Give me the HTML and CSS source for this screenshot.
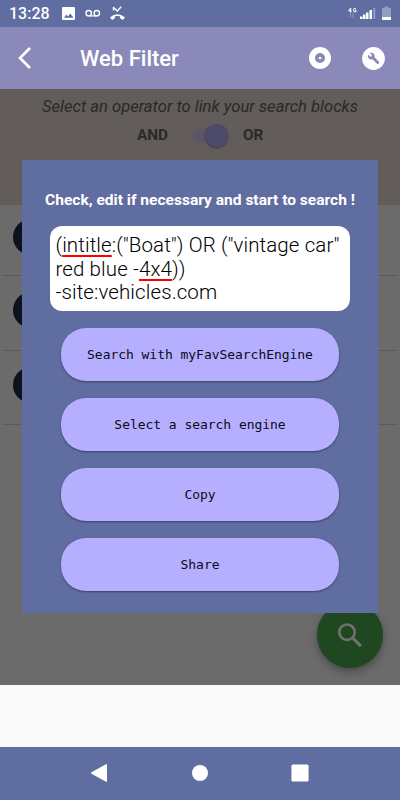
FILE: index.html
```html
<!DOCTYPE html>
<html lang="en">
<head>
  <meta charset="UTF-8" />
  <meta name="viewport" content="width=device-width, initial-scale=1.0"/>
  <title>Web Filter</title>
  <link rel="stylesheet" href="styles.css">
</head>
<body>
  <div class="screen">
    <div class="status-bar">
      <span class="clock">13:28</span>
      <svg class="status-left" width="64" height="16" viewBox="0 0 64 16">
        <path fill="#fff" fill-rule="evenodd" d="M1.300 1h10.400q1.300 0 1.300 1.300v10.400q0 1.300-1.300 1.300H1.300Q0 14 0 12.700V2.300Q0 1 1.300 1zM2 11.700h9.500L8.300 7.400l-2.400 3.100-1.600-2z"/>
        <g fill="none" stroke="#fff" stroke-width="1.400">
          <circle cx="26.700" cy="7.200" r="2.700"/>
          <circle cx="34.800" cy="7.200" r="2.700"/>
          <path d="M26.700 9.900h8.100M51.500 1v3.500M51.300 1.200l4 3.800 3.900-4.200"/>
        </g>
        <path fill="#fff" d="M48 11.500q7.300-6.400 15 0l-2.200 2.500q-1.400-1.300-2.700-1.700v-2q-2.600-.8-5.200 0v2q-1.300.4-2.700 1.700z"/>
      </svg>
      <svg class="status-right" width="44" height="15" viewBox="0 0 44 15">
        <path fill="none" stroke="#fff" stroke-width="1" d="M2.700 6.500V2L.600 5h3M8 2.800q-2.500-1.400-2.500 1.200t2.500 1.800V4.200H6.800"/>
        <path fill="none" stroke="#8f9ac0" d="M2.500 7v4M5 7v5"/>
        <path fill="#fff" d="M12 10.500h2.500V13H12zM15 8.500h2.500V13H15zM18 6.500h2.500V13H18zM21.500 4H24v9h-2.500z"/>
        <path fill="#929dc4" d="M25.300 2h2v11h-2zM34 2h2.500V.500h4V2H43v9h-9z"/>
        <path fill="#fff" d="M34 11h9v3h-9z"/>
      </svg>
    </div>

    <div class="app-bar">
      <svg class="back" width="16" height="24" viewBox="0 0 16 24">
        <path fill="none" stroke="#fff" stroke-width="2.700" d="M13 2L3 12l10 10"/>
      </svg>
      <div class="title">Web Filter</div>
      <svg class="disc" width="22" height="22" viewBox="0 0 22 22">
        <circle cx="11" cy="11" r="11" fill="#fff"/>
        <circle cx="11" cy="11" r="5" fill="#8a89ba"/>
        <circle cx="11" cy="11" r="1.300" fill="#fff"/>
      </svg>
      <svg width="23" height="23" viewBox="0 0 23 23">
        <circle cx="11.500" cy="11.500" r="11.400" fill="#fff"/>
        <path fill="#8a89ba" transform="translate(5.400 5.200) scale(.52)" d="M22.700 19l-9.100-9.100c.9-2.300.4-5-1.500-6.900-2-2-5-2.400-7.400-1.300L9 6 6 9 1.600 4.700C.4 7.100.9 10.100 2.900 12.100c1.900 1.900 4.600 2.400 6.900 1.500l9.100 9.100c.4.4 1 .4 1.400 0l2.300-2.300c.5-.4.5-1.100.1-1.400z"/>
      </svg>
    </div>

    <div class="page">
      <div class="operator">
        <div class="hint">Select an operator to link your search blocks</div>
        <div class="choice">
          <span>AND</span>
          <span class="switch"><span class="thumb"></span></span>
          <span>OR</span>
        </div>
      </div>
      <div class="blocks">
        <div class="block"><span class="bullet"></span></div>
        <div class="block"><span class="bullet"></span></div>
        <div class="block"><span class="bullet"></span></div>
      </div>
      <div class="fab">
        <svg width="24" height="25" viewBox="0 0 24 25">
          <circle cx="9" cy="9.200" r="7.700" fill="none" stroke="#6f706f" stroke-width="2.600"/>
          <path fill="none" stroke="#6f706f" stroke-width="3.200" d="M14.800 15.200l8 8"/>
        </svg>
      </div>

      <div class="dialog">
        <div class="dialog-title">Check, edit if necessary and start to search !</div>
        <div class="query">(<span class="typo">intitle</span>:("Boat") OR ("vintage car"<br>red blue -<span class="typo">4x4</span>))<br>-site:vehicles.com</div>
        <button>Search with myFavSearchEngine</button>
        <button>Select a search engine</button>
        <button>Copy</button>
        <button>Share</button>
      </div>
    </div>

    <div class="bottom"></div>

    <div class="nav-bar">
      <svg width="18" height="20" viewBox="0 0 18 20">
        <path fill="#fff" d="M15 1.200q1-.5 1 .6v16.400q0 1.100-1 .6L.500 10.700q-1-.7 0-1.400z"/>
      </svg>
      <svg width="18" height="18" viewBox="0 0 18 18">
        <circle cx="9" cy="9" r="8" fill="#fff"/>
      </svg>
      <svg width="18" height="18" viewBox="0 0 18 18">
        <rect x=".4" y=".4" width="17.200" height="17.200" rx="1.500" fill="#fff"/>
      </svg>
    </div>
  </div>
</body>
</html>
```
FILE: styles.css
```css
body {
  margin: 0;
  font-family: Roboto, sans-serif;
}
.screen {
  display: flex;
  flex-direction: column;
  width: 400px;
  height: 800px;
  overflow: hidden;
}
.status-bar {
  display: flex;
  align-items: center;
  height: 27px;
  box-sizing: border-box;
  padding: 0 8px 0 9px;
  background-color: #5f6da0;
  color: #fff;
}
.clock {
  width: 53px;
  font-size: 16px;
  font-weight: 500;
  line-height: 27px;
}
.status-right {
  margin-left: auto;
}
.app-bar {
  display: flex;
  align-items: center;
  height: 62px;
  box-sizing: border-box;
  padding: 0 15px 0 17px;
  background-color: #8a89ba;
  color: #fff;
}
.title {
  flex: 1;
  margin-left: 47px;
  padding-top: 1px;
  font-size: 22px;
  font-weight: 500;
}
.disc {
  margin-right: 31px;
}
.page {
  position: relative;
  height: 596px;
  overflow: hidden;
  background-color: #6b6b6b;
}
.operator {
  height: 116px;
  background-color: #625c5b;
  color: #2a2929;
}
.hint {
  padding-top: 7px;
  font-size: 16.6px;
  font-style: italic;
  line-height: 22px;
  text-align: center;
  white-space: nowrap;
}
.choice {
  display: flex;
  align-items: center;
  height: 34px;
  padding-left: 137px;
  font-size: 15.3px;
  font-weight: bold;
}
.switch {
  display: flex;
  justify-content: flex-end;
  align-items: center;
  width: 36px;
  height: 15px;
  margin: 0 15px 0 24px;
  border-radius: 8px;
  background-color: #5d5765;
}
.thumb {
  width: 23px;
  height: 23px;
  border-radius: 50%;
  background-color: #4e4a6e;
  box-shadow: 0 1px 2px rgba(0, 0, 0, 0.4);
}
.blocks {
  padding: 0 3px;
}
.block {
  display: flex;
  align-items: center;
  height: 74px;
  box-sizing: border-box;
  padding: 0 0 6px 10px;
  border-bottom: 1px solid #5a5a64;
}
.block:first-child {
  height: 71px;
}
.block:nth-child(2) {
  height: 75px;
}
.bullet {
  width: 36px;
  height: 36px;
  border-radius: 50%;
  background-color: #0c131e;
}
.fab {
  position: absolute;
  right: 17px;
  bottom: 17px;
  display: flex;
  align-items: center;
  justify-content: center;
  width: 66px;
  height: 66px;
  border-radius: 50%;
  background-color: #204820;
  box-shadow: 0 0 1px #3d4560, 0 4px 8px rgba(0, 0, 0, 0.3);
}
.dialog {
  position: absolute;
  top: 71px;
  left: 22px;
  display: flex;
  flex-direction: column;
  align-items: center;
  width: 356px;
  height: 453px;
  box-sizing: border-box;
  padding-top: 30px;
  background-color: #5f6da0;
}
.dialog-title {
  color: #fff;
  font-size: 15.55px;
  font-weight: bold;
  line-height: 20px;
  white-space: nowrap;
}
.query {
  width: 300px;
  height: 85px;
  box-sizing: border-box;
  margin: 16px 0 17px;
  padding: 8px 0 0 5.5px;
  border-radius: 12px;
  background-color: #fff;
  color: #000;
  font-size: 20.5px;
  font-weight: 300;
  letter-spacing: 0.1px;
  line-height: 23.5px;
  white-space: nowrap;
}
.typo {
  text-decoration: underline 2px #f00;
  text-decoration-skip-ink: none;
  text-underline-offset: 3px;
}
button {
  width: 278px;
  height: 53px;
  margin: 0 0 17px;
  padding: 0;
  border: none;
  border-radius: 25px;
  background-color: #b6afff;
  box-shadow: 0 1px 2px rgba(0, 0, 0, 0.4);
  color: #0b0b16;
  font-family: "DejaVu Sans Mono", monospace;
  font-size: 13px;
  letter-spacing: -0.04px;
}
.bottom {
  flex: 1;
  background-color: #fafafa;
}
.nav-bar {
  display: flex;
  align-items: center;
  justify-content: center;
  gap: 82px;
  height: 53px;
  box-sizing: border-box;
  padding-bottom: 1px;
  background-color: #5f6da0;
}
```
